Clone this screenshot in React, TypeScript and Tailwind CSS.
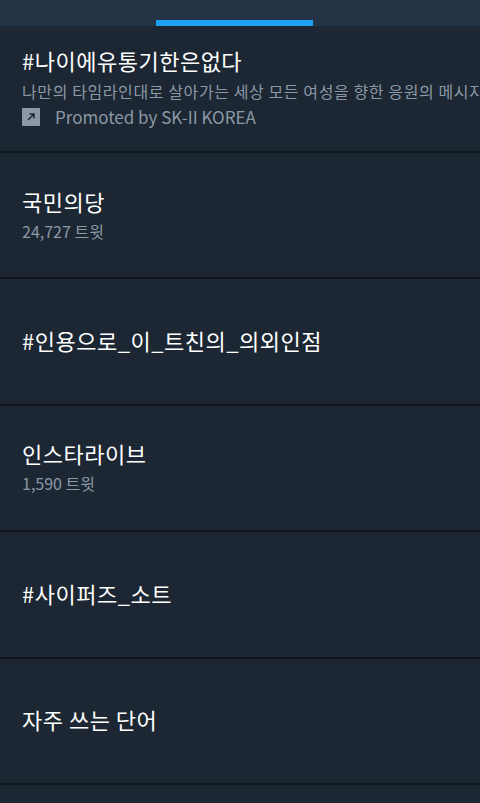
import React from 'react';

type Trend = {
  title: string;
  count?: string;
  desc?: string;
  promoted?: string;
};

const trends: Trend[] = [
  {
    title: '#나이에유통기한은없다',
    desc: '나만의 타임라인대로 살아가는 세상 모든 여성을 향한 응원의 메시지',
    promoted: 'Promoted by SK-II KOREA',
  },
  { title: '국민의당', count: '24,727 트윗' },
  { title: '#인용으로_이_트친의_의외인점' },
  { title: '인스타라이브', count: '1,590 트윗' },
  { title: '#사이퍼즈_소트' },
  { title: '자주 쓰는 단어' },
];

const font = { fontFamily: '"Noto Sans CJK KR", "Noto Sans", sans-serif' };

function PromotedIcon() {
  return (
    <span className="w-[18px] h-[18px] bg-[#8b98a5] flex items-center justify-center rounded-[1px]">
      <svg width="12" height="12" viewBox="0 0 12 12" fill="none">
        <path d="M3 9L9 3M4.5 3H9V7.5" stroke="#1c2733" strokeWidth="1.5" />
      </svg>
    </span>
  );
}

export default function App() {
  return (
    <div className="w-[480px] h-[803px] bg-[#1c2733] overflow-hidden" style={font}>
      {/* 탭 바 */}
      <div className="h-[26px] bg-[#243447] flex items-end">
        <div className="ml-[156px] w-[157px] h-[6px] bg-[#1da1f2]" />
      </div>

      {trends.map((t, i) => (
        <div
          key={i}
          className={`${i === 0 ? 'h-[127px]' : 'h-[126.4px]'} border-b-2 border-[#0f161d] flex flex-col justify-center pl-[22px] pr-2 pb-[3px] overflow-hidden`}
        >
          <div className="text-white text-[22px] leading-[30px] tracking-[0.5px]">{t.title}</div>
          {t.desc && (
            <div className="mt-[4px] text-[#8b98a5] text-[16px] leading-[24px] whitespace-nowrap tracking-[0.6px]">
              {t.desc}
            </div>
          )}
          {t.promoted && (
            <div className="mt-[2px] flex items-center gap-[15px] text-[#8b98a5] text-[17px] leading-[24px]">
              <PromotedIcon />
              <span>{t.promoted}</span>
            </div>
          )}
          {t.count && (
            <div className="mt-[4px] text-[#8b98a5] text-[16px] leading-[22px]">{t.count}</div>
          )}
        </div>
      ))}
    </div>
  );
}
